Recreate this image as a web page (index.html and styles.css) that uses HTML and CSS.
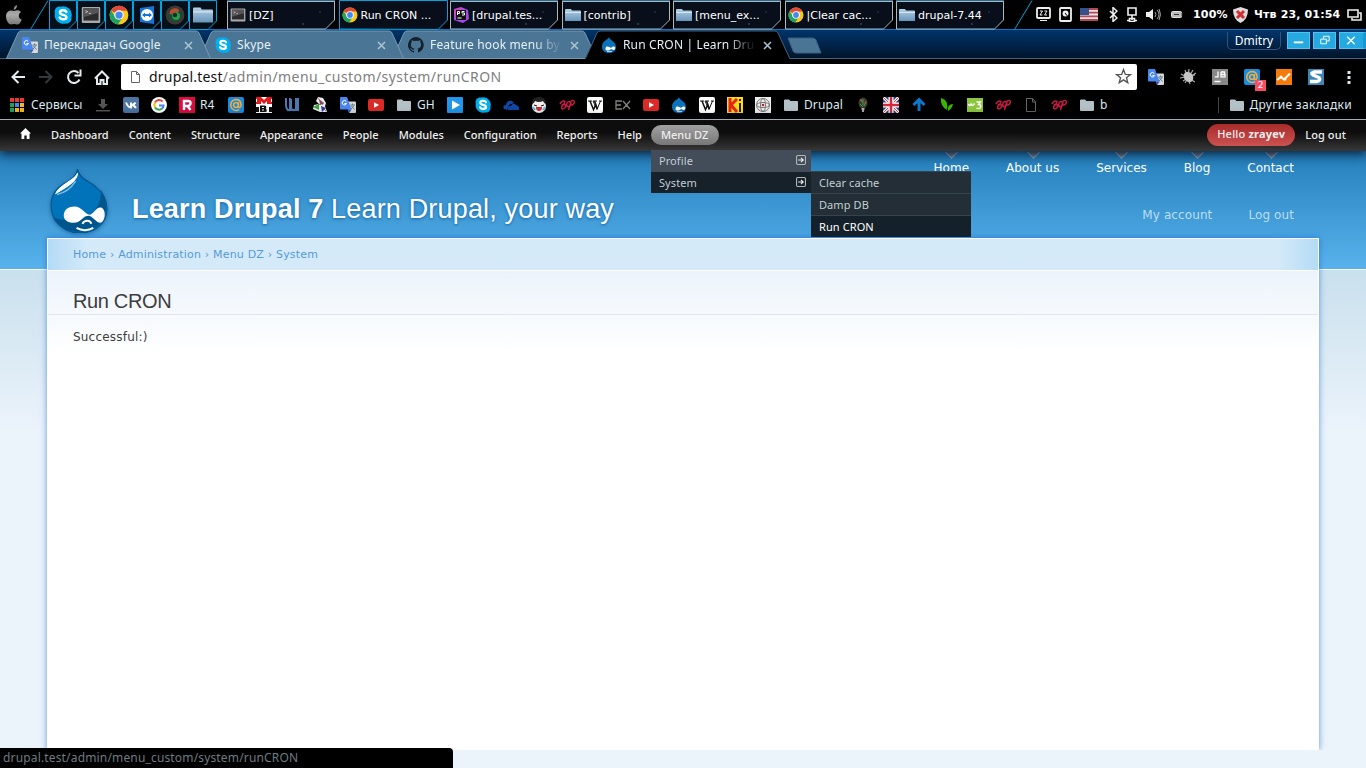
FILE: index.html
```html
<!DOCTYPE html>
<html lang="uk">
<head>
<meta charset="utf-8">
<title>Run CRON | Learn Drupal 7</title>
<link rel="stylesheet" href="styles.css">
</head>
<body>
<svg class="defs" aria-hidden="true">
<defs>
<linearGradient id="steel" x2="0" y2="1"><stop stop-color="#b5d1e6"/><stop offset="1" stop-color="#6796ba"/></linearGradient>
<linearGradient id="grey" x2="0" y2="1"><stop stop-color="#888"/><stop offset=".5" stop-color="#aaa"/><stop offset="1" stop-color="#777"/></linearGradient>
<linearGradient id="ps" x2="1" y2="1"><stop stop-color="#e83fae"/><stop offset=".5" stop-color="#9b4ff0"/><stop offset="1" stop-color="#b33ee8"/></linearGradient>
<symbol id="chrome" viewBox="0 0 16 16"><circle cx="8" cy="8" r="7.500" fill="#f8c81c"/><path d="M8 8 1.500 4.300A7.500 7.500 0 0 1 14.600 4.500H8z" fill="#dd4b3e"/><path d="M1.500 4.200A7.500 7.500 0 0 0 7.200 15.500L11 9.500 8 8 5 9.500z" fill="#1da362"/><circle cx="8" cy="8" r="3.800" fill="#fff"/><circle cx="8" cy="8" r="2.900" fill="#4587f3"/></symbol>
<symbol id="skype" viewBox="0 0 16 16"><path d="M.5 4.800A4.500 4.500 0 0 1 6 .6 7.500 7.500 0 0 1 15.400 10 4.500 4.500 0 0 1 10 15.500 7.500 7.500 0 0 1 .8 6.500z" fill="#00aff0"/><path d="M11 5.300C10 3.200 5.300 3.200 5.300 5.700c0 2.800 5.700 1.600 5.700 4.300 0 2.400-5 2.500-6 .3" fill="none" stroke="#fff" stroke-width="2.200" stroke-linecap="round"/></symbol>
<symbol id="term" viewBox="0 0 18 16"><rect x=".7" y=".7" width="16.600" height="14.600" rx="1" fill="#aaa"/><rect x="2.200" y="2" width="13.600" height="11" fill="#2c2c2e"/><path d="M2.200 2h13.600v4L2.200 10z" fill="#555"/><path d="M4 4l2 1-2 1M7 6.500h2" fill="none" stroke="#ddd" stroke-width=".7"/></symbol>
<symbol id="dir" viewBox="0 0 16 14"><path d="M0 2q0-1 1-1h5l1 1.500h8q1 0 1 1V13H0z" fill="url(#steel)"/><path d="M0 4h16v1H0z" fill="#d4e5f0"/></symbol>
<symbol id="folder" viewBox="0 0 14 12"><path d="M0 1.500Q0 .5 1 .5h4l1.500 1.500H13q1 0 1 1V11q0 1-1 1H1q-1 0-1-1z" fill="#b4c2c8"/></symbol>
<symbol id="trans" viewBox="0 0 16 16"><path d="M6 4.500h9q1 0 1 1V15q0 1-1 1H9z" fill="#d6d8da"/><path d="M1 0h6l4.500 12.500H1q-1 0-1-1V1q0-1 1-1z" fill="#4a86f0"/><path d="M7.500 12.500h4L9.500 16z" fill="#3155b8"/><path d="M6.300 4.600A2.200 2.200 0 1 0 6.500 6.500H4.500" fill="none" stroke="#fff"/><path d="M10.500 8h4.500M12.500 6.500V8M11 8.500l3.500 4M14 8.500 11 12" fill="none" stroke="#617c87"/></symbol>
<symbol id="drop" viewBox="0 0 60 64"><path d="M28 1c2 9 8 10 18 17 8 6 12 14 12 22 0 14-12 24-28 24S1 52 1 37c0-9 5-17 14-22 7-4 12-7 13-14z" fill="#0073ba" stroke="#005487"/><path d="M52 22c0 22-17 35-49 27 5 9 15 14 27 14 17 0 27-11 27-25 0-6-2-11-5-16z" fill="#00558c"/><path d="M28 5c0 7-9 13-22 20 4-9 20-13 22-20z" fill="#fff" stroke="#fff"/><path d="M7 26q12-2 19-13" stroke="#81b9dc" stroke-width="1.500" fill="none"/><path d="M14 47c0-6 5-9 11-9 7 0 11 8 15 8s7-8 12-7c6 2 4 15-1 15-4 0-8-7-12-7-6 0-7 7-15 7-6 0-10-3-10-7z" fill="#fff"/><path d="M33 55c2-4 8-4 9 0M27 59c5 3 12 3 17 0" fill="none" stroke="#fff" stroke-width="2"/></symbol>
<symbol id="mini" viewBox="0 0 16 16"><path d="M8 0c0 3 7 4 7 10 0 4-3 6-7 6s-7-2-7-6.500C1 4 7 3 8 0z" fill="#0b73b9"/><path d="M4.500 12c0-4 4-2 5.500-1 3-3 5-1 4 1s-3 0-4 0c-2 2-5.500 2-5.500 0z" fill="#fff"/><path d="M6 14.500h5" stroke="#a9d0e8"/></symbol>
<symbol id="git" viewBox="0 0 16 16"><path d="M8 0a8 8 0 0 0-2.500 15.600c.4 0 .5-.2.500-.4v-1.500c-2.200.5-2.700-1-2.700-1-.4-.9-.9-1.200-.9-1.200-.7-.5 0-.5 0-.5.800.1 1.200.8 1.200.8.700 1.300 1.900.9 2.400.7 0-.5.300-.9.500-1.100-1.800-.2-3.600-.9-3.600-4 0-.9.300-1.600.8-2.100 0-.2-.4-1 .1-2.100 0 0 .7-.2 2.200.8a7.700 7.700 0 0 1 4 0c1.500-1 2.200-.8 2.200-.8.500 1.100.1 1.900.1 2.100.5.500.8 1.200.8 2.100 0 3.100-1.900 3.800-3.700 4 .3.300.6.700.6 1.500v2.200c0 .2.100.5.500.4A8 8 0 0 0 8 0z" fill="#15202a"/></symbol>
<symbol id="tube" viewBox="0 0 16 12"><rect width="16" height="12" rx="2" fill="#dc2a27"/><path d="M6 3.200v5.600L11 6z" fill="#fff"/></symbol>
<symbol id="mail" viewBox="0 0 16 16"><rect width="16" height="16" rx="2" fill="#168de2"/><circle cx="8" cy="8" r="2.400" fill="none" stroke="#ffad32" stroke-width="1.400"/><path d="M10.500 5v4q0 1.700 1.300 1.500C14 9 13.600 2.500 8 2.500a5.500 5.500 0 1 0 3 10.200" fill="none" stroke="#ffad32" stroke-width="1.400"/></symbol>
<symbol id="wiki" viewBox="0 0 16 16"><rect width="16" height="16" rx="2" fill="#fff"/><path d="M1 4h4m1 0h4m2 0h3M6 4l4 8.500L13.500 4" fill="none" stroke="#111"/><path d="M3 4l3.500 8.500L9 7M7.500 4l3 8" fill="none" stroke="#111" stroke-width="1.500"/></symbol>
<symbol id="bp" viewBox="0 0 16 16"><path d="M1 7C2 4 6 3 6 5S3 8 2.500 8.500M3.500 8C7 6 7.500 10 5 11.500S1.500 11 4 7.500M8 9.500C7 6 9 3.500 11 5s0 5-3 4.500M12 4.500 9.500 13M11.500 4.500c3-2.500 5 0 3 2.500q-1.500 1.500-3 1" fill="none" stroke="#d51b48" stroke-width="1.400"/></symbol>
<symbol id="sub" viewBox="0 0 9 9"><rect x=".5" y=".5" width="8" height="8" rx="1" fill="none" stroke="#afb7bd"/><path d="M2 4.500h4.500M4.500 2.500l2 2-2 2" fill="none" stroke="#eee"/></symbol>
<symbol id="slot" viewBox="0 0 28 30"><path d="M.5 29.500V.5h27V21l-8.500 8.500z" fill="#06101b" stroke="#00a3dc"/></symbol>
<symbol id="task" viewBox="0 0 109 30"><path d="M.5 29V1.500h107V20L98.500 29z" fill="#080f1a" stroke="#aab8c0"/><path d="M0 1h108" stroke="#7ec9f0"/><circle cx="76" cy="24" r="1" fill="#31435a"/><circle cx="93" cy="12" r=".8" fill="#31435a"/></symbol>
<symbol id="tab" viewBox="0 0 205 29"><path d="M0 29 12 3q1-2 3-2H190q2 0 3 2l12 26z" fill="#4b7595"/><path d="M.5 28.500 12 3q1-2 3-2H190q2 0 3 2l11.500 25.500z" fill="none" stroke="#7899b0"/></symbol>
</defs>
</svg>

<header class="taskbar">
  <svg class="apple" viewBox="0 0 18 20"><path d="M12 0q.3 3.500-3.300 5Q8.500 1.500 12 0zM9 6c2-.6 4.500-1.600 7 1-3.300 2-2.800 6.500.8 7.800C15.500 18 13.500 20.500 11 19.300q-2-.8-4 0C4 20.500 1 15.500 1 11.500 1 6 5.500 4.500 9 6z" fill="url(#grey)"/></svg>
  <svg class="slash" viewBox="0 0 19 30"><path d="M.5 29.500 18 .5" stroke="#00a3dc"/></svg>
  <nav class="quick">
    <span class="slot"><svg class="edge"><use href="#slot"/></svg><svg class="i18"><use href="#skype"/></svg></span>
    <span class="slot"><svg class="edge"><use href="#slot"/></svg><svg class="i20"><use href="#term"/></svg></span>
    <span class="slot"><svg class="edge"><use href="#slot"/></svg><svg class="i20"><use href="#chrome"/></svg></span>
    <span class="slot"><svg class="edge"><use href="#slot"/></svg><svg class="i18" viewBox="0 0 18 18"><path d="M2 2 16 0v18L2 16z" fill="#1674d8"/><circle cx="9" cy="9" r="6" fill="#fff"/><path d="M4 9l3-2.500v1.500h4V6.500L14 9l-3 2.500V10H7v1.500z" fill="#1674d8"/></svg></span>
    <span class="slot"><svg class="edge"><use href="#slot"/></svg><svg class="i20" viewBox="0 0 18 18"><circle cx="9" cy="9" r="8.500" fill="#3d3836"/><circle cx="9" cy="9" r="6" fill="#174d35"/><path d="M4 8a5 5 0 0 1 9-3L9 9z" fill="#b64c30"/><circle cx="10" cy="10" r="3.500" fill="#2a9c4a"/><circle cx="9" cy="9" r="2" fill="#15302b"/></svg></span>
    <span class="slot"><svg class="edge"><use href="#slot"/></svg><svg class="i20"><use href="#dir"/></svg></span>
  </nav>
  <nav class="tasks">
    <span class="task"><svg class="edge"><use href="#task"/></svg><svg class="i16"><use href="#term"/></svg>[DZ]</span>
    <span class="task active"><svg class="edge" viewBox="0 0 109 30"><path d="M.5 29V.5h108V20L99 29.500z" fill="#080f1a" stroke="#00a3dc"/></svg><svg class="i16"><use href="#chrome"/></svg>Run CRON ...</span>
    <span class="task"><svg class="edge"><use href="#task"/></svg><svg class="i16" viewBox="0 0 16 16"><path d="M1 2 8 0l7 3 1 9-6 4-9-3z" fill="url(#ps)"/><rect x="3" y="3" width="10" height="10" fill="#111"/><path d="M4.500 8V4.500H6.500v2H4.500M11.500 4.500H9v1.500h2.500v2H9M4.500 11h4" fill="none" stroke="#fff"/></svg>[drupal.tes...</span>
    <span class="task"><svg class="edge"><use href="#task"/></svg><svg class="i16"><use href="#dir"/></svg>[contrib]</span>
    <span class="task"><svg class="edge"><use href="#task"/></svg><svg class="i16"><use href="#dir"/></svg>[menu_ex...</span>
    <span class="task"><svg class="edge"><use href="#task"/></svg><svg class="i16"><use href="#chrome"/></svg>|Clear cac...</span>
    <span class="task"><svg class="edge"><use href="#task"/></svg><svg class="i16"><use href="#dir"/></svg>drupal-7.44</span>
  </nav>
  <svg class="slash end" viewBox="0 0 19 30"><path d="M.5 29.500 18 .5" stroke="#00a3dc"/></svg>
  <div class="tray">
    <svg class="w15" viewBox="0 0 15 15"><rect x="1" y="1" width="13" height="10" rx="1" fill="none" stroke="#eee" stroke-width="1.800"/><path d="M4 4h2.500L4 8h2.500M8.500 4H11L8.500 8H11M4 13.500h7" fill="none" stroke="#eee"/></svg>
    <svg class="w13" viewBox="0 0 13 15"><rect x="1" y="1" width="11" height="13" rx="1" fill="none" stroke="#eee" stroke-width="1.800"/><circle cx="6.500" cy="6.500" r="3" fill="#eee"/><path d="M6 6l4 5" stroke="#000"/></svg>
    <svg class="flag" viewBox="0 0 18 13"><rect width="18" height="13" fill="#e9e2e4"/><path d="M0 1h18M0 4.700h18M0 8.400h18M0 12h18" stroke="#b64753" stroke-width="1.800"/><rect width="9" height="7" fill="#35518c"/></svg>
    <svg class="w9" viewBox="0 0 9 15"><path d="M1 4l7 7-4 3.500V.5L8 4 1 11" fill="none" stroke="#eee" stroke-width="1.500"/></svg>
    <svg class="w12" viewBox="0 0 12 15"><path d="M2 1h8v7H2zM6 8v5M1 13.500h3m4 0h3M3.500 11.500h5v3h-5z" fill="none" stroke="#eee" stroke-width="1.600"/></svg>
    <svg class="w15" viewBox="0 0 15 15"><path d="M0 5h3l4-3v11L3 10H0z" fill="#eee"/><path d="M9 5q2 2.500 0 5M11 3q4 4.500 0 9M13 2q3 5.500 0 11" fill="none" stroke="#aaa"/></svg>
    <svg class="batt" viewBox="0 0 12 7"><rect x=".5" y=".5" width="10" height="6" rx="1" fill="#bbb" stroke="#ddd"/><path d="M3 3.500h5M11 2v3" stroke="#333"/></svg>
    <b class="pct">100%</b>
    <svg class="shield" viewBox="0 0 15 16"><path d="M7.500 0 15 2.500q0 10-7.500 13.500Q0 12.500 0 2.500z" fill="#ddd"/><path d="M4 4l7 7M11 4l-7 7" stroke="#d32d35" stroke-width="3"/></svg>
    <b class="clock">Чтв 23, 01:54</b>
    <svg class="wins" viewBox="0 0 15 12"><path d="M1 1h10v7H1zM12 4h2v7H5V9" fill="none" stroke="#eee" stroke-width="1.600"/></svg>
  </div>
</header>

<section class="strip">
  <div class="tab t1"><svg class="shape"><use href="#tab"/></svg><svg class="i16"><use href="#trans"/></svg><span class="name">Перекладач Google</span><svg class="x" viewBox="0 0 9 9"><path d="M1 1l7 7M8 1 1 8"/></svg></div>
  <div class="tab t2"><svg class="shape"><use href="#tab"/></svg><svg class="i16"><use href="#skype"/></svg><span class="name">Skype</span><svg class="x" viewBox="0 0 9 9"><path d="M1 1l7 7M8 1 1 8"/></svg></div>
  <div class="tab t3"><svg class="shape"><use href="#tab"/></svg><svg class="i16"><use href="#git"/></svg><span class="name fade">Feature hook menu by</span><svg class="x" viewBox="0 0 9 9"><path d="M1 1l7 7M8 1 1 8"/></svg></div>
  <div class="tab t4"><svg class="shape" viewBox="0 0 205 29"><path d="M0 29 12 3q1-2 3-2H190q2 0 3 2l12 26z"/><path d="M.5 28.500 12 3q1-2 3-2H190q2 0 3 2l12 26" fill="none" stroke="#45617c"/></svg><svg class="i16"><use href="#mini"/></svg><span class="name fade">Run CRON | Learn Dru</span><svg class="x" viewBox="0 0 9 9"><path d="M1 1l7 7M8 1 1 8"/></svg></div>
  <svg class="newtab" viewBox="0 0 35 17"><path d="M1 1h24q3 0 4 2l5 13H9q-2 0-3-2z" fill="#4b7595" stroke="#3a5f7e"/></svg>
  <div class="controls">
    <span class="user">Dmitry</span>
    <span class="wbtn"><svg viewBox="0 0 22 16"><path d="M6 10h10" stroke="#fff" stroke-width="2"/></svg></span>
    <span class="wbtn"><svg viewBox="0 0 22 16"><path d="M7 6.500h6v5H7zM10 6V3.500h6v5h-3" fill="none" stroke="#fff"/></svg></span>
    <span class="wbtn last"><svg viewBox="0 0 22 16"><path d="M7.500 4l8 8m0-8-8 8" stroke="#fff" stroke-width="1.400"/></svg></span>
  </div>
</section>

<section class="toolbar">
  <svg class="nav" viewBox="0 0 100 18"><g fill="none" stroke="#e4ecee" stroke-width="2"><path d="M15 9H2M8.500 3l-6 6 6 6"/><path d="M29 9h13M35.500 3l6 6-6 6" stroke="#333a3c"/><path d="M69.500 11.500A6 6 0 1 1 68.500 5M70.500 1.500v6h-6"/><path d="M85 10.500 92 3.500l7 7M87 9.500V16h3.500v-4h3v4H97V9.500"/></g></svg>
  <div class="omni"><svg class="page" viewBox="0 0 9 12"><path d="M.5.500h5l3 3v8h-8zM5.500.500v3h3" fill="none" stroke="#666"/></svg><span><b>drupal.test</b>/admin/menu_custom/system/runCRON</span>
  <svg class="star" viewBox="0 0 16 16"><path d="M8 1.500 9.700 6l4.800.2-3.700 3 1.200 4.600L8 11.200l-4 2.600 1.200-4.600-3.700-3L6.300 6z" fill="none" stroke="#555" stroke-width="1.300"/></svg></div>
  <div class="exts">
    <svg class="i16"><use href="#trans"/></svg>
    <svg class="i16" viewBox="0 0 16 16"><path d="M1 5l14 8M5 1l5 14M9 0l-1 9M13 1 5 14M0 9l15-3M16 4 3 12" stroke="#aaa" stroke-width="1.200"/><ellipse cx="8.500" cy="8" rx="4.500" ry="5.500" transform="rotate(-35 8.500 8)" fill="#c6c6c6"/></svg>
    <svg class="i16" viewBox="0 0 16 16"><rect width="16" height="16" fill="#888"/><path d="M6 2.500v5.300H2.800M9 3v4.800h4V5.500H9h3.500V3H9M2.500 12.500h6" fill="none" stroke="#fff" stroke-width="1.300"/></svg>
    <span class="badged"><svg class="i16"><use href="#mail"/></svg><em>2</em></span>
    <svg class="i16" viewBox="0 0 16 16"><rect width="16" height="16" fill="#f57c0a"/><path d="M1 11l4-3 3 2.500 6-6" fill="none" stroke="#fff" stroke-width="2"/><circle cx="5" cy="8" r="1.500" fill="#fff"/><circle cx="9" cy="10" r="1.500" fill="#fff"/></svg>
    <svg class="i16" viewBox="0 0 16 16"><rect width="16" height="16" fill="#3b86b5"/><path d="M14 3H6Q2 4 5 6l6 2.500q2 3-2 4H2" fill="none" stroke="#fff" stroke-width="3.300"/></svg>
    <svg class="dots" viewBox="0 0 4 14"><path d="M.5 1h3v3h-3zM.5 6h3v3h-3zM.5 11h3v3h-3z" fill="#dce5e7"/></svg>
  </div>
</section>

<nav class="marks">
  <span class="mk apps"><svg class="i14" viewBox="0 0 14 14"><path d="M0 0h4v4H0zM5 0h4v4H5zM10 0h4v4h-4z" fill="#e53b31"/><path d="M0 5h4v4H0z" fill="#18a45b"/><path d="M5 5h4v4H5z" fill="#4285f4"/><path d="M10 5h4v4h-4zM5 10h4v4H5zM10 10h4v4h-4z" fill="#f6b81c"/><path d="M0 10h4v4H0z" fill="#18a45b"/><path d="M4.500 0v14M9.500 0v14M0 4.500h14M0 9.500h14" stroke="#000"/></svg><span>Сервисы</span></span>
  <svg class="i16" viewBox="0 0 16 16"><path d="M6 2h4v5h3l-5 5-5-5h3zM1 13h14v1.500H1z" fill="#555"/></svg>
  <svg class="i16" viewBox="0 0 16 16"><rect width="16" height="16" rx="2" fill="#4c75a3"/><path d="M3 5.500q2 5 5 5v-5M8 8q3 0 4.500-2.500M8.500 8q2.500 0 4.500 3" fill="none" stroke="#fff" stroke-width="2"/></svg>
  <svg class="i16" viewBox="0 0 16 16"><circle cx="8" cy="8" r="8" fill="#fff"/><g fill="none" stroke-width="2"><path d="M4 5.500A4.700 4.700 0 0 1 11.500 4.500" stroke="#ea4335"/><path d="M4 5.500a5 5 0 0 0 0 5" stroke="#fbbc05"/><path d="M4 10.500a4.700 4.700 0 0 0 7 1" stroke="#34a853"/><path d="M8 8.500h4.500q0 2-1.500 3" stroke="#4285f4"/></g></svg>
  <span class="mk r4"><svg class="i16" viewBox="0 0 16 16"><rect width="16" height="16" fill="#dc0b42"/><path d="M5 13V4h4q3 0 2.500 2.500T8.500 9H5M8.500 9l3 4" fill="none" stroke="#fff" stroke-width="2.400"/></svg><span>R4</span></span>
  <svg class="i16"><use href="#mail"/></svg>
  <svg class="i16" viewBox="0 0 16 16"><rect width="16" height="16" fill="#fff"/><path d="M0 0h5l3 3 3-3h5v2h-1v3h1v2h-5V4L8 7 5 4v3H0V5h1V2H0z" fill="#e41a1a"/><path d="M4 15V8.500h4.500q2.500 0 1.500 3 2 3.500-1 3.500zM0 10h3v5H0zM13 10h3v5h-3z" fill="#111"/><path d="M6 10.500h2M6 13h2" stroke="#fff"/></svg>
  <svg class="i16" viewBox="0 0 16 16"><path d="M2 1v8q1 5 4 4V1M7 2v9q2 4 5 1V1M14 1v12H3" fill="none" stroke="#4d78af" stroke-width="2"/></svg>
  <svg class="i16" viewBox="0 0 16 16"><path d="M6 0l5 1 3 5-1 3 2 6H8l-7-3 1-4 5-1-3-3z" fill="#eee"/><path d="M7 2l5 4-4 2z" fill="#a24a70"/><path d="M1 10l6-3v6z" fill="#3a3"/><path d="M9 9l5 2-4 4z" fill="#33b"/><path d="M6 1l5 7M12 6 6 8M9 9l5 5" stroke="#444" stroke-width=".6"/></svg>
  <svg class="i16"><use href="#trans"/></svg>
  <svg class="i16"><use href="#tube"/></svg>
  <span class="mk gh"><svg class="i14"><use href="#folder"/></svg><span>GH</span></span>
  <svg class="i16" viewBox="0 0 16 16"><rect width="16" height="16" rx="1" fill="#2196ea"/><path d="M5 3.500v9L13 8z" fill="#fff"/></svg>
  <svg class="i16"><use href="#skype"/></svg>
  <svg class="i16" viewBox="0 0 16 16"><path d="M1 12q-2-4 2-4 1-5 6-4l2 2-5 2-2 5zM5 13q-1-4 3-4 2-4 5-1 4 1 3 5z" fill="#1048a8"/></svg>
  <svg class="i16" viewBox="0 0 16 16"><circle cx="8" cy="9" r="7" fill="#f4efed"/><path d="M1 7Q1 0 8 0t7 7q-2 0-3-3-4 2-8 0-1 3-3 3z" fill="#222"/><path d="M3 8l3 1M13 8l-3 1" stroke="#111"/><path d="M5 10h6q0 4-3 4t-3-4z" fill="#c32b35"/><path d="M2 10l2 3M14 10l-2 3" stroke="#59b8e0" stroke-width="2"/></svg>
  <svg class="i16"><use href="#bp"/></svg>
  <svg class="i16"><use href="#wiki"/></svg>
  <svg class="i16" viewBox="0 0 16 16"><path d="M7 4H1v8h6M1 8h5M8 4l7 8M15 4l-7 8" fill="none" stroke="#858079" stroke-width="1.300"/></svg>
  <svg class="i16"><use href="#tube"/></svg>
  <svg class="i16"><use href="#mini"/></svg>
  <svg class="i16"><use href="#wiki"/></svg>
  <svg class="i16" viewBox="0 0 16 16"><rect width="16" height="16" fill="#ffda10"/><path d="M3 1v14M10 2 4 8l6 7" fill="none" stroke="#e12619" stroke-width="3"/><path d="M13 6v9M13 2v2" stroke="#222" stroke-width="2"/></svg>
  <svg class="i16" viewBox="0 0 16 16"><rect width="16" height="16" fill="#eee"/><g fill="none" stroke="#777"><circle cx="8" cy="8" r="6.500"/><ellipse cx="8" cy="8" rx="6.500" ry="2.500"/><ellipse cx="8" cy="8" rx="2.500" ry="6.500"/></g><circle cx="8" cy="8" r="1.300" fill="#b22"/></svg>
  <span class="mk dr"><svg class="i14"><use href="#folder"/></svg><span>Drupal</span></span>
  <svg class="i16" viewBox="0 0 16 16"><ellipse cx="8" cy="6" rx="4.500" ry="5.500" fill="#443b23"/><path d="M5 3l3 2M8 2v6M11 4l-2 5M5 7l3 3" stroke="#26a06b"/><path d="M6 2l1 3M10 7l1-2" stroke="#c44"/><path d="M6.500 12h3M7 14h2" stroke="#aaa" stroke-width="2"/></svg>
  <svg class="i16" viewBox="0 0 16 16"><rect width="16" height="16" fill="#27458d"/><path d="M0 0l16 16M16 0 0 16" stroke="#fff" stroke-width="3"/><path d="M0 0l16 16M16 0 0 16" stroke="#d33"/><path d="M8 0v16M0 8h16" stroke="#fff" stroke-width="5"/><path d="M8 0v16M0 8h16" stroke="#d5263b" stroke-width="2.500"/></svg>
  <svg class="i16" viewBox="0 0 16 16"><path d="M8 14V3M2.500 8 8 2.500 13.500 8" fill="none" stroke="#0879cb" stroke-width="3"/></svg>
  <svg class="i16" viewBox="0 0 16 16"><path d="M2 1q8 2 6 12Q1 9 2 1zM9 14q-1-7 5-7-1 5-5 7z" fill="#38b600"/></svg>
  <svg class="i16" viewBox="0 0 16 16"><rect y="1" width="16" height="14" fill="#8cc63f"/><path d="M1.500 7q1 3 2.500 0 1 3 3.500-.5M9.500 5h4L11.500 7.500q3 0 2 3-2 2-4 .5" fill="none" stroke="#fff" stroke-width="1.400"/></svg>
  <svg class="i16"><use href="#bp"/></svg>
  <svg class="i16" viewBox="0 0 16 16"><path d="M3.500 1.500h6l3 3.500v9.500h-9zM9.500 1.500V5h3" fill="none" stroke="#666"/></svg>
  <svg class="i16"><use href="#bp"/></svg>
  <span class="mk b"><svg class="i14"><use href="#folder"/></svg><span>b</span></span>
  <span class="mk other"><svg class="i14"><use href="#folder"/></svg><span>Другие закладки</span></span>
</nav>

<main class="site">
  <nav class="admin">
    <svg class="home" viewBox="0 0 11 11"><path d="M5.500 0 11 5.500H9.500V11H6.700V7.500H4.300V11H1.500V5.500H0z" fill="#fff"/></svg>
    <a>Dashboard</a><a>Content</a><a>Structure</a><a>Appearance</a><a>People</a><a>Modules</a><a>Configuration</a><a>Reports</a><a>Help</a>
    <div class="holder"><a class="open">Menu DZ</a>
      <ul class="drop"><li class="lit">Profile<svg><use href="#sub"/></svg></li><li>System<svg><use href="#sub"/></svg></li></ul>
      <ul class="drop second"><li>Clear cache</li><li>Damp DB</li><li class="hot">Run CRON</li></ul>
    </div>
    <a class="hello">Hello <b>zrayev</b></a><a class="out">Log out</a>
  </nav>
  <header class="head">
    <svg class="logo" viewBox="0 0 60 64" preserveAspectRatio="none"><use href="#drop" width="60" height="64"/></svg>
    <h1><b>Learn Drupal 7</b> Learn Drupal, your way</h1>
    <div class="menus">
      <nav class="main"><a>Home</a><a>About us</a><a>Services</a><a>Blog</a><a>Contact</a></nav>
      <nav class="user-menu"><a>My account</a><a>Log out</a></nav>
    </div>
  </header>
  <div class="canvas">
    <article class="sheet">
      <div class="crumbs">Home › Administration › Menu DZ › System</div>
      <h2>Run CRON</h2>
      <p>Successful:)</p>
    </article>
  </div>
</main>
<div class="status">drupal.test/admin/menu_custom/system/runCRON</div>
</body>
</html>
```
FILE: styles.css
```css
* { box-sizing: border-box; }
body { margin: 0; width: 1366px; height: 768px; overflow: hidden; background: #000; font-family: "Noto Sans", sans-serif; display: flex; flex-direction: column; }
svg { flex: none; display: block; }
.defs { position: absolute; width: 0; height: 0; }
.i14 { width: 14px; height: 14px; }
.i16 { width: 16px; height: 16px; }
.i18 { width: 18px; height: 18px; }
.i20 { width: 20px; height: 20px; }
.w9 { width: 9px; }
.w12 { width: 12px; }
.w13 { width: 13px; }
.w15 { width: 15px; }

.taskbar { height: 30px; flex: none; display: flex; background: #000; border-bottom: 1px solid #0878cf; color: #fff; font-family: "DejaVu Sans", sans-serif; }
.apple { width: 18px; height: 20px; margin: 5px 0 0 5px; }
.slash { width: 19px; height: 30px; margin-left: 7px; }
.quick { display: flex; }
.slot { position: relative; isolation: isolate; width: 28px; height: 30px; display: flex; align-items: center; justify-content: center; }
.edge { position: absolute; z-index: -1; inset: 0; width: 100%; height: 100%; }
.tasks { display: flex; gap: 2.500px; margin-left: 10px; }
.task { position: relative; isolation: isolate; width: 109px; height: 30px; display: flex; align-items: center; gap: 3px; padding-left: 3px; font-size: 11px; white-space: nowrap; }
.slash.end { margin-left: 9px; }
.tray { display: flex; align-items: center; height: 29px; margin-left: 3px; font-size: 11px; }
.tray svg { height: 15px; margin-right: 8px; }
.tray .flag { width: 18px; height: 13px; margin-right: 11px; }
.tray .batt { width: 12px; height: 7px; margin-left: 2px; margin-right: 10px; }
.tray .shield { width: 15px; height: 16px; margin: 0 6px 0 4px; }
.tray .wins { width: 15px; height: 12px; margin: 0 0 0 5px; }
.pct { width: 36px; letter-spacing: .2px; }
.clock { width: 88px; white-space: nowrap; letter-spacing: .15px; }

.strip { height: 29px; flex: none; display: flex; background: linear-gradient(#00346a, #00152c); border-bottom: 1px solid #45617c; padding-left: 6px; }
.tab { position: relative; width: 205px; height: 29px; margin-right: -12px; padding: 7px 0 0 16px; display: flex; color: #e5f1f6; font-size: 12px; line-height: 16px; }
.t1 { z-index: 3; }
.t2 { z-index: 2; }
.t3 { z-index: 1; }
.t4 { z-index: 4; }
.shape { position: absolute; left: 0; top: 0; width: 205px; height: 29px; }
.tab .i16, .name { position: relative; }
.name { width: 133px; margin-left: 6px; white-space: nowrap; letter-spacing: .15px; }
.fade { -webkit-mask-image: linear-gradient(90deg, #000 78%, transparent 100%); }
.x { position: relative; width: 9px; height: 9px; margin: 4px 0 0 7px; fill: none; stroke: #a9c6d0; stroke-width: 1.500; }
.newtab { width: 35px; height: 17px; margin: 7px 0 0 9px; }
.controls { margin-left: auto; display: flex; gap: 3px; padding-top: 2px; }
.user { width: 54px; height: 18px; margin-right: 3px; border: 1px solid #385371; border-top: 0; border-radius: 0 0 5px 5px; color: #fff; font-size: 12px; line-height: 17px; text-align: center; }
.wbtn { width: 23px; height: 17px; background: #25a9e0; border: 1px solid #53c2ed; }
.wbtn svg { width: 21px; height: 15px; }
.wbtn.last { width: 27px; border-right: 3px solid #1699d4; }

.toolbar { height: 36px; flex: none; display: flex; align-items: center; padding: 0 0 1px 10px; }
.nav { width: 100px; height: 18px; }
.omni { width: 1016px; height: 26px; margin-left: 11px; padding: 0 5px 0 10px; background: #fff; border-radius: 2px; display: flex; align-items: center; color: #808080; font-size: 14px; }
.omni span { margin-left: 9px; padding-bottom: 1px; white-space: nowrap; letter-spacing: .43px; }
.omni b { color: #111; font-weight: 400; letter-spacing: .2px; }
.page { width: 9px; height: 12px; }
.star { width: 17px; height: 17px; margin-left: auto; }
.exts { display: flex; gap: 16px; margin-left: 11px; align-items: center; }
.badged { position: relative; width: 16px; height: 16px; }
.badged em { position: absolute; right: -6px; bottom: -6px; width: 11px; height: 11px; background: #f94d66; color: #fff; font: 9px/11px "DejaVu Sans", sans-serif; text-align: center; }
.dots { width: 4px; height: 14px; margin-left: 7px; }

.marks { height: 24px; flex: none; display: flex; align-items: center; gap: 12px; padding: 0 14px 4px 10px; color: #dceaf2; font-size: 12px; line-height: 16px; }
.mk { display: flex; align-items: center; gap: 6px; white-space: nowrap; }
.mk span { padding-bottom: 1px; }
.apps { width: 73px; gap: 7px; letter-spacing: .1px; }
.r4 { width: 37px; gap: 5px; }
.gh { width: 38px; margin-left: 1px; }
.dr { width: 59px; margin-left: 1px; letter-spacing: .1px; }
.mk.b { margin-left: 1px; }
.mk.other { margin-left: auto; height: 16px; padding-left: 11px; border-left: 1px solid #444; letter-spacing: .3px; }

.site { flex: 1; background: #ebf3fb; font-family: "DejaVu Sans", sans-serif; }
.admin { position: relative; z-index: 2; height: 32px; padding-bottom: 2px; display: flex; align-items: center; border-top: 1px solid #aaa; background: linear-gradient(#0d0d0d 40%, #383838); box-shadow: 0 2px 12px 1px rgba(0, 10, 30, .85); color: #eee; font: 500 11px/20px "Noto Sans", sans-serif; }
.home { width: 11px; height: 11px; margin: 0 10px 2px 20px; }
.admin a { padding: 0 10px; white-space: nowrap; }
.holder { position: relative; margin-left: -1px; }
.admin .open { display: block; width: 68px; height: 20px; border-radius: 10px; background: linear-gradient(#a0a0a0, #777); }
.drop { position: absolute; left: 0; top: 25px; width: 160px; margin: 0; padding: 0; list-style: none; font-weight: 400; line-height: 21px; letter-spacing: .1px; background: #16212a; color: #c2ced5; }
.drop li { height: 21px; padding: 0 5px 0 8px; display: flex; justify-content: space-between; }
.drop .lit { height: 22px; background: #434c59; }
.drop svg { width: 10px; height: 10px; margin-top: 5px; }
.second { left: 160px; top: 46px; }
.second li { height: 22px; line-height: 21px; background: #232e36; border-top: 1px solid #35434c; }
.second .hot { background: #15212a; color: #fff; }
.admin .hello { width: 88px; margin-left: auto; height: 22px; line-height: 20px; border-radius: 11px; background: linear-gradient(#a72b2b, #cc5151); letter-spacing: .2px; }
.admin .out { margin-right: 10px; letter-spacing: .1px; }

.head { height: 118px; padding: 0 72px 0 50px; display: flex; background: linear-gradient(#237eba, #58b3ed); }
.logo { width: 59px; height: 65px; margin-top: 17px; filter: drop-shadow(0 1px 2px #2366a0); }
.head h1 { margin: 42px 0 0 23px; font: 27px/32px "Liberation Sans", sans-serif; letter-spacing: .17px; color: #fff; text-shadow: 0 1px 3px #1261a8; white-space: nowrap; }
.menus { margin-left: auto; display: flex; flex-direction: column; align-items: flex-end; color: #fff; font-size: 12px; line-height: 16px; }
.main { position: relative; z-index: 3; clip-path: inset(0 0 0 0); display: flex; gap: 37px; height: 26px; padding-top: 9px; }
.main { z-index: auto; }
.main a { position: relative; }
.main a::before { content: ""; position: absolute; left: calc(50% - 4px); top: -12px; width: 8px; height: 8px; transform: rotate(45deg); background: linear-gradient(135deg, transparent 45%, #546a80 50%, #75869a); border: solid #a5aeb8; border-width: 0 1px 1px 0; }
.user-menu { display: flex; gap: 36px; margin-top: 30px; color: #bddef4; letter-spacing: .1px; }
.canvas { position: relative; height: 499px; padding: 0 47px; border-top: 1px solid #fff; background: linear-gradient(#c9e0ed, #ebf3fb 160px); }
.sheet { position: relative; height: 512px; margin-top: -32px; border: 1px solid #fff; background: linear-gradient(#ebf3fb 30px, #fff 115px); box-shadow: 0 0 6px rgba(20, 100, 210, .65); color: #3d3d3d; clip-path: inset(-10px -10px 0); }
.crumbs { height: 32px; padding-left: 25px; border-bottom: 1px solid #fff; background: linear-gradient(90deg, #b4dbf5, #d4eaf9 40px calc(100% - 40px), #b4dbf5); color: #559bd8; font-size: 11px; line-height: 32px; letter-spacing: .18px; }
.sheet h2 { height: 44px; margin: 0; padding-left: 25px; border-bottom: 1px solid #e0e7ec; font: 20px/60px "Liberation Sans", sans-serif; letter-spacing: -.35px; }
.sheet p { margin: 14px 0 0 25px; font-size: 12px; line-height: 16px; letter-spacing: .2px; }
.status { position: absolute; left: 0; bottom: 0; width: 453px; height: 20px; padding-left: 3px; background: #000; border-radius: 0 4px 0 0; color: #6d7b82; font-size: 12px; line-height: 19px; letter-spacing: .16px; }
```
